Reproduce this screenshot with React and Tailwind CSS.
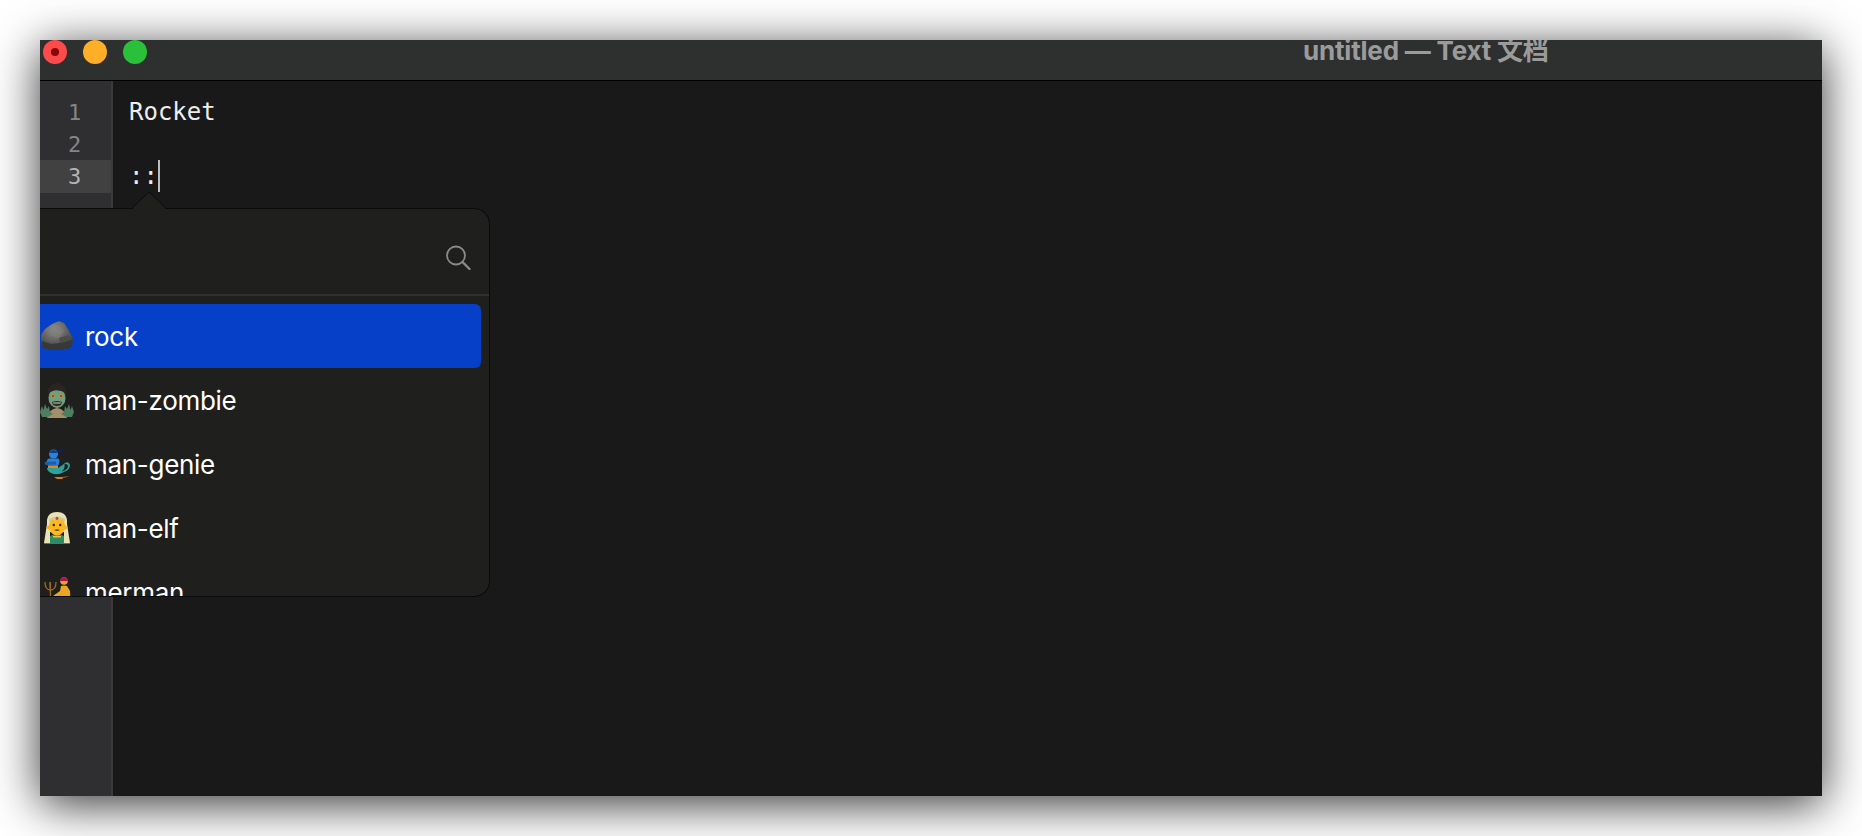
import React from "react";

const Rock = () => (
  <svg width="34" height="30" viewBox="0 0 34 30">
    <defs>
      <radialGradient id="rk" cx="42%" cy="28%" r="80%">
        <stop offset="0" stopColor="#8e8e8a" />
        <stop offset="0.5" stopColor="#626260" />
        <stop offset="1" stopColor="#323231" />
      </radialGradient>
    </defs>
    <path d="M1 14 L5 8 L12 3 L19 0 L24 2 L28 8 L33 17 L32 25 L27 28 L11 29 L3 27 L1 20 Z" fill="url(#rk)" />
    <path d="M2 20 L11 23 L20 22 L32 19 L32 25 L27 28 L11 29 L3 27 Z" fill="#383837" />
    <path d="M9 9 L18 4 L24 10 L19 17 L11 15 Z" fill="#7f7f7b" opacity=".55" />
    <path d="M19 17 L28 14 L31 19 L20 22 Z" fill="#4c4c4a" />
  </svg>
);

const Zombie = () => (
  <svg width="34" height="35" viewBox="0 0 34 35">
    <path d="M7 35 Q9 26 17 25 Q25 26 27 35 Z" fill="#a58f66" />
    <path d="M8 13 Q7 1 17 0 Q27 1 26 13 L26 20 L8 20 Z" fill="#2b2522" />
    <ellipse cx="17" cy="15" rx="8.5" ry="10" fill="#6f9e80" />
    <path d="M8 11 Q15 4 26 10 L26 6 Q17 -1 8 6 Z" fill="#2b2522" />
    <circle cx="13" cy="13" r="2" fill="#c98c2a" />
    <circle cx="21" cy="13" r="2" fill="#c98c2a" />
    <circle cx="13" cy="13" r=".8" fill="#2a1d10" />
    <circle cx="21" cy="13" r=".8" fill="#2a1d10" />
    <path d="M12 19 Q17 17 22 19 L21 22 Q17 24 13 22 Z" fill="#352622" />
    <path d="M13 19.5 L21 19.5 L20.5 20.5 L13.5 20.5 Z" fill="#d8d4b8" />
    <path d="M0 29 L2 23 L3.5 27 L5 21 L7 26 L9 23 L10 29 L13 31 L8 34 L2 34 Z" fill="#4f7d60" />
    <path d="M34 29 L32 23 L30.5 27 L29 21 L27 26 L25 23 L24 29 L21 31 L26 34 L32 34 Z" fill="#4f7d60" />
  </svg>
);

const Genie = () => (
  <svg width="26" height="33" viewBox="0 0 26 33">
    <path d="M12 3 Q17 0 21 3 Q16 3 14 6 Z" fill="#10205c" />
    <circle cx="9.5" cy="6" r="4.5" fill="#2c82d8" />
    <path d="M5.5 4 Q9.5 0 13.5 4 L13.5 5 L5.5 5 Z" fill="#123a8c" />
    <path d="M4 18 Q1 12 5 10.5 L14 10.5 Q17 12 14 18 Z" fill="#2a80d8" />
    <path d="M0.5 14 L12 13.5 L12 16.5 L1.5 17 Z" fill="#1a5cb0" />
    <rect x="4" y="18" width="10" height="2" fill="#e08a1e" />
    <path d="M3 20 L14 20 Q19 17 21 15 Q25 13 26 17 Q26 22 20 24 Q13 28 7 25 Q3 23 3 20 Z" fill="#2f9f9a" />
    <path d="M20.5 16 Q24 15.5 24 18.5 Q23 22 17.5 23.5 Q21.5 20.5 20.5 16 Z" fill="#1f1f1d" />
    <path d="M10 29 L19 29 Q20 30 18 31 L13 31 Z" fill="#d08020" />
    <path d="M17 29 L26 28 L20 30 Z" fill="#a8561a" />
  </svg>
);

const Elf = () => (
  <svg width="28" height="32" viewBox="0 0 28 32">
    <path d="M1 32 Q3 23 14 22 Q25 23 27 32 Z" fill="#2e8b62" />
    <path d="M4 12 Q3 0 14 0 Q25 0 24 12 L27 31 L21 31 L21 20 L7 20 L7 31 L1 31 Z" fill="#e9e2b4" />
    <path d="M3 16 L7 12 L7 18 Z M25 16 L21 12 L21 18 Z" fill="#f6b21b" />
    <ellipse cx="14" cy="14" rx="8" ry="9.5" fill="#fbb81f" />
    <path d="M6 7 Q14 2 22 7 L22 9.5 Q14 5.5 6 9.5 Z" fill="#cfc99a" />
    <circle cx="14" cy="6.5" r="1.4" fill="#c0405a" />
    <circle cx="10.8" cy="13" r="1.2" fill="#3a2308" />
    <circle cx="17.2" cy="13" r="1.2" fill="#3a2308" />
    <path d="M11 18 Q14 16.5 17 18 Q14 20 11 18 Z" fill="#7a4210" />
    <rect x="10" y="24" width="8" height="1.5" fill="#e7c15f" />
  </svg>
);

const Merman = () => (
  <svg width="32" height="32" viewBox="0 0 32 32">
    <circle cx="23" cy="5" r="3.8" fill="#e9a21f" />
    <path d="M19 3.5 Q23 -1 27 3.5 L27 5 L19 5 Z" fill="#a8144f" />
    <path d="M20 10 Q23 9 26 10 L29 15 L30 32 L22 32 L21 20 L13 22 L12 20 L19 15 Z" fill="#eaa524" />
    <path d="M10 32 L9 6" stroke="#a06a20" strokeWidth="1.3" fill="none" />
    <path d="M4 6 Q4 14 9.5 14 Q15 14 15 6 M9.2 6 L9.5 14" stroke="#a06a20" strokeWidth="1.3" fill="none" />
    <path d="M0 32 L2 22 L4 32 Z" fill="#5fb6d8" />
  </svg>
);

const items = [
  { name: "rock", Icon: Rock, active: true },
  { name: "man-zombie", Icon: Zombie },
  { name: "man-genie", Icon: Genie },
  { name: "man-elf", Icon: Elf },
  { name: "merman", Icon: Merman },
];

const mono = "font-['DejaVu_Sans_Mono',monospace]";

export default function App() {
  return (
    <div className="h-[836px] w-[1862px] overflow-hidden bg-white pt-10 pl-10">
      <div className="flex h-[756px] w-[1782px] flex-col bg-[#191919] shadow-[0_8px_44px_rgba(0,0,0,0.8)]">
        <header className="flex h-[41px] shrink-0 items-start overflow-hidden border-b border-black bg-[#2e302f] font-['Inter','Noto_Sans_CJK_SC',sans-serif]">
          <div className="flex gap-4 pl-[3px]">
            <span className="flex size-6 items-center justify-center rounded-full bg-[#fd4b4c]">
              <span className="size-2 rounded-full bg-[#8a0606]" />
            </span>
            <span className="size-6 rounded-full bg-[#feae27]" />
            <span className="size-6 rounded-full bg-[#2ac03a]" />
          </div>
          <h1 className="ml-[1156px] text-[26px] leading-[22px] font-bold tracking-[-0.2px] whitespace-nowrap text-[#9b9b9b]">
            untitled — Text 文档
          </h1>
        </header>

        <div className="relative flex min-h-0 flex-1">
          <aside className={`w-[73px] shrink-0 border-r-2 border-[#3a3a3c] bg-[#2f2f31] pt-[15px] pr-[2px] text-center text-[22px] leading-8 text-[#858585] ${mono}`}>
            <div className="relative top-px">1</div>
            <div className="relative top-px">2</div>
            <div className="-mr-[2px] bg-[#414142] pt-px pr-[2px] text-[#b4b4b4]">3</div>
          </aside>
          <main className={`flex-1 pt-[15px] pl-[16px] text-2xl leading-8 text-[#ededed] ${mono}`}>
            <div className="h-8">Rocket</div>
            <div className="h-8" />
            <div className="flex h-8 items-center">
              <span>::</span>
              <span className="h-8 w-0.5 bg-[#bdbdbd]" />
            </div>
          </main>

          <div className="absolute top-[127px] left-0 h-[389px] w-[450px]">
            <svg className="absolute top-[-17px] left-[91px] z-10" width="36" height="19" viewBox="0 0 36 19">
              <path d="M1 17 L18 1 L35 17" fill="#1f1f1d" stroke="#0b0b0b" strokeWidth="1" />
              <path d="M2 17 L34 17 L34 19 L2 19 Z" fill="#1f1f1d" />
            </svg>
            <div className="flex h-full flex-col overflow-hidden rounded-r-2xl border border-l-0 border-[#0b0b0b] bg-[#1f1f1d] font-['Inter',sans-serif]">
              <div className="flex h-[87px] shrink-0 items-start justify-end border-b-2 border-[#30302e] pt-[36px] pr-[18px]">
                <svg width="26" height="26" viewBox="0 0 26 26" fill="none" stroke="#8a8a88" strokeLinecap="round">
                  <circle cx="11" cy="10.5" r="9" strokeWidth="1.8" />
                  <path d="M17.5 17 L24.5 24" strokeWidth="2.4" />
                </svg>
              </div>
              <ul className="flex min-h-0 flex-1 flex-col overflow-hidden pt-2 pr-2">
                {items.map(({ name, Icon, active }) => (
                  <li
                    key={name}
                    className={`flex h-16 shrink-0 items-center rounded-r-md text-[26px] leading-8 text-white ${active ? "bg-[#0640c8]" : ""}`}
                  >
                    <span className="flex w-[45px] shrink-0 justify-center pr-[11px]">
                      <Icon />
                    </span>
                    <span className="relative top-px tracking-[-0.3px]">{name}</span>
                  </li>
                ))}
              </ul>
            </div>
          </div>
        </div>
      </div>
    </div>
  );
}
